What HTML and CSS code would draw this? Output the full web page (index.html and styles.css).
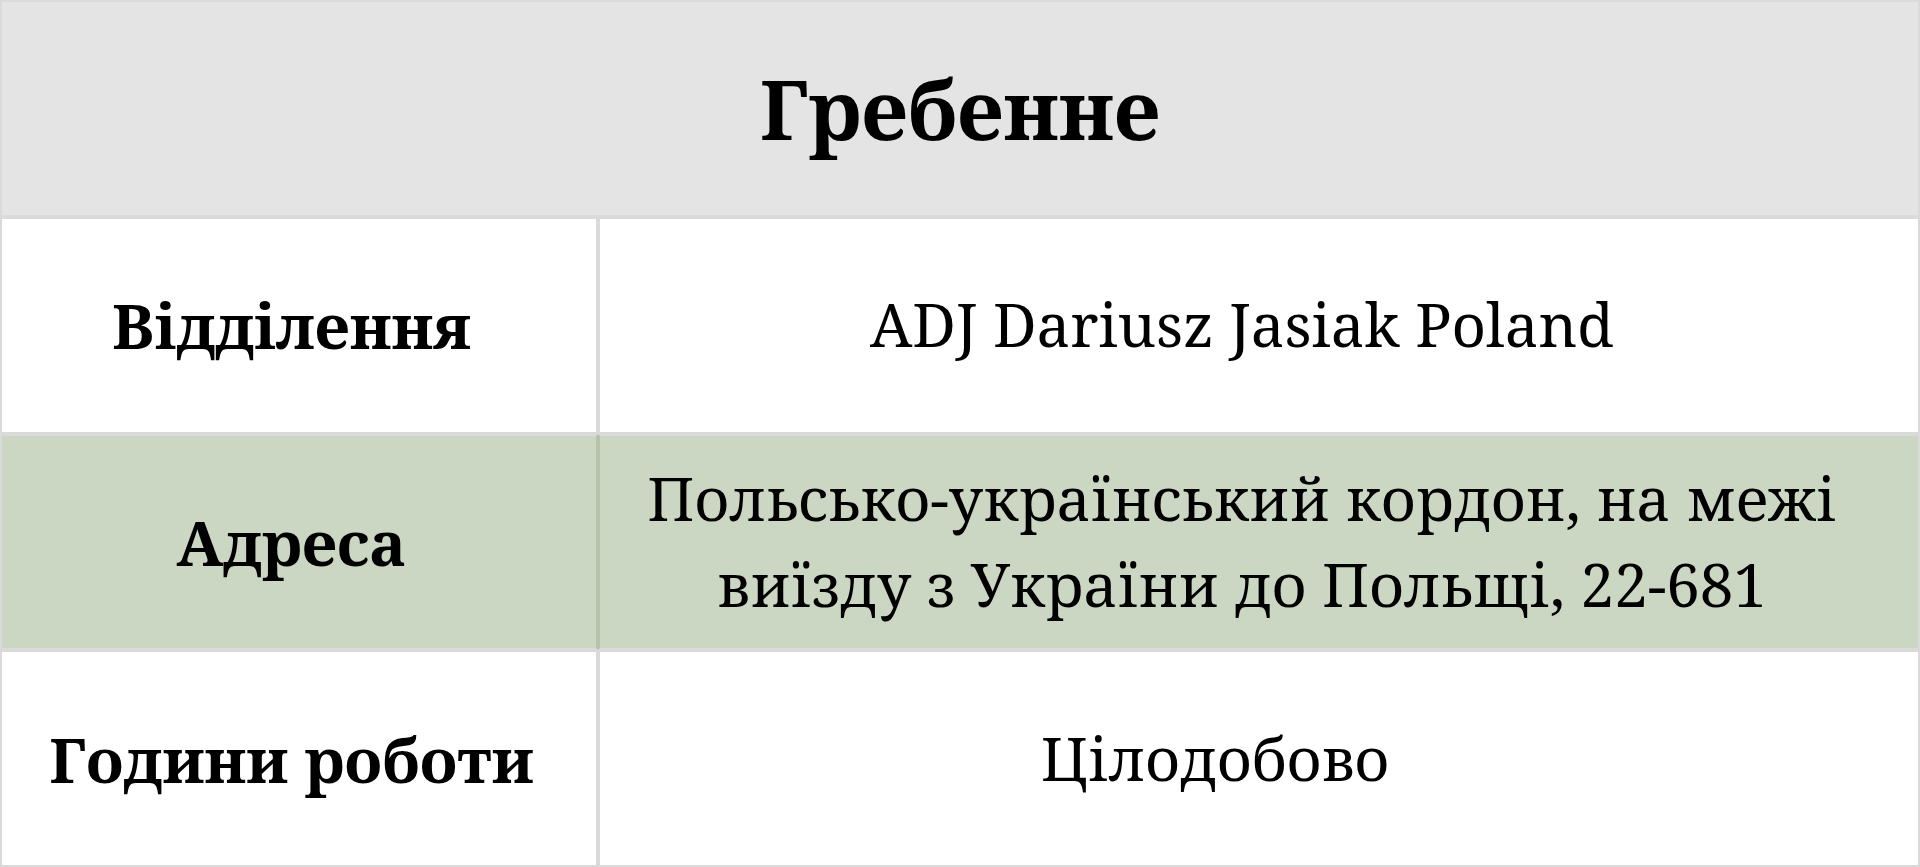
FILE: index.html
```html
<!DOCTYPE html>
<html lang="uk">
<head>
<meta charset="utf-8">
<title>Гребенне</title>
<link rel="stylesheet" href="styles.css">
</head>
<body>
<div class="info-table">
  <div class="cell head">Гребенне</div>
  <div class="cell label">Відділення</div>
  <div class="cell value">ADJ Dariusz Jasiak Poland</div>
  <div class="cell label alt">Адреса</div>
  <div class="cell value alt">Польсько-український кордон, на межі виїзду з України до Польщі, 22-681</div>
  <div class="cell label">Години роботи</div>
  <div class="cell value"><span class="hours">Цілодобово</span></div>
</div>
</body>
</html>
```
FILE: styles.css
```css
html, body {
  margin: 0;
  padding: 0;
  background: #ffffff;
}
body {
  font-family: "Noto Serif", "DejaVu Serif", "Liberation Serif", serif;
  color: #000;
}
.info-table {
  display: grid;
  grid-template-columns: 598px 1fr;
  grid-template-rows: repeat(4, 1fr);
  width: 1920px;
  height: 867px;
  box-sizing: border-box;
}
.cell {
  box-sizing: border-box;
  border: 2px solid #dadada;
  display: flex;
  align-items: center;
  justify-content: center;
  text-align: center;
  background: #ffffff;
}
.head {
  grid-column: 1 / 3;
  background: #e4e4e4;
  font-size: 82px;
  font-weight: 700;
}
.label {
  font-size: 62px;
  font-weight: 700;
  padding-right: 15px;
}
.value {
  font-size: 60px;
  font-weight: 400;
  line-height: 1.43;
  padding: 0 40px 0 6px;
}
.alt {
  background: #cbd7c2;
}
.label.alt {
  border-right-color: #b5c3ab;
}
.value.alt {
  border-left-color: #b5c3ab;
}
.hours {
  padding-right: 54px;
}
```
